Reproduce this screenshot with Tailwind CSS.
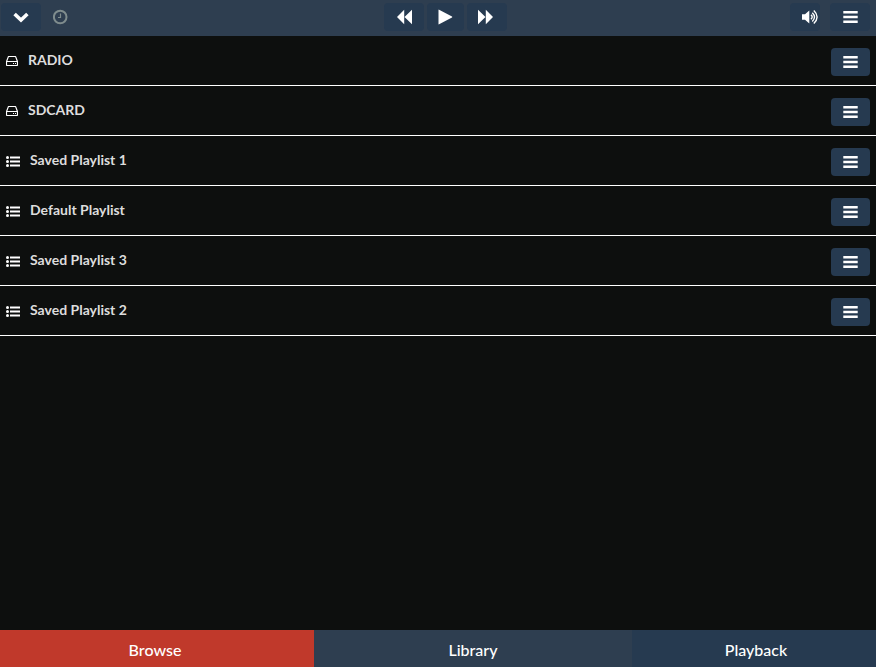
<!DOCTYPE html>
<html lang="en">

<head>
    <title>Browse</title>
    <meta charset="UTF-8">
    <meta name="viewport" content="width=device-width, initial-scale=1.0">
    <script src="https://cdn.jsdelivr.net/npm/@tailwindcss/browser@4"></script>
</head>

<body class="min-h-screen flex flex-col bg-[#0d0f0e] text-white font-['Lato',sans-serif]">
    <!-- Shared icons -->
    <svg class="hidden">
        <symbol id="bars" viewBox="0 0 15 14" preserveAspectRatio="xMinYMin">
            <path d="M.3 1h14.4v2.4H.3zM.3 5.8h14.4v2.4H.3zM.3 10.6h14.4V13H.3z" />
        </symbol>
        <symbol id="drive" viewBox="0 0 12 10">
            <path d="M.5 5.5 2.2 1.1Q2.4.5 3 .5h6q.6 0 .8.6l1.7 4.4v3.2q0 .8-.8.8H1.3q-.8 0-.8-.8zh11" fill="none" stroke="currentColor" stroke-width="1.2" />
            <path d="M7 7h1v1H7zM9 7h1v1H9z" />
        </symbol>
        <symbol id="list" viewBox="0 0 14 11">
            <circle cx="1.5" cy="1.5" r="1.5" />
            <circle cx="1.5" cy="5.5" r="1.5" />
            <circle cx="1.5" cy="9.5" r="1.5" />
            <path d="M4 .5h10v2H4zM4 4.5h10v2H4zM4 8.5h10v2H4z" />
        </symbol>
    </svg>

    <header class="h-9 pb-[2px] pr-[6px] pl-px grid grid-cols-[1fr_auto_1fr] items-center bg-[#2e3e50]">
        <div class="flex items-center gap-3">
            <button aria-label="Collapse" class="w-10 h-7 rounded flex items-center justify-center bg-[#263a50]">
                <svg class="w-4 h-3" viewBox="0 0 16 12">
                    <path d="m1.6 3 6.4 6 6.4-6" fill="none" stroke="currentColor" stroke-width="3.6" />
                </svg>
            </button>
            <svg class="w-4 h-4 text-[#7f8c8d]" viewBox="0 0 16 16" fill="none" stroke="currentColor">
                <circle cx="7.2" cy="8" r="6.3" stroke-width="2" />
                <path d="M7.5 4.5v4H5" stroke-width="1.2" />
            </svg>
        </div>
        <div class="ml-5 flex items-center gap-[3px]">
            <button aria-label="Previous" class="w-10 h-7 rounded flex items-center justify-center bg-[#263a50]">
                <svg class="w-4 h-4 fill-current" viewBox="0 0 16 16">
                    <path d="M8.2 .8v14.4L1 8zM16 .8v14.4L8.5 8z" />
                </svg>
            </button>
            <button aria-label="Play" class="w-[37px] h-7 rounded flex items-center justify-center bg-[#263a50]">
                <svg class="w-4 h-4 fill-current" viewBox="0 0 16 16">
                    <path d="M.5 1q0-.7.6-.3L14 7.6q.6.4 0 .8L1.1 15.3Q.5 15.6.5 15z" />
                </svg>
            </button>
            <button aria-label="Next" class="w-10 h-7 pr-[2px] rounded flex items-center justify-center bg-[#263a50]">
                <svg class="w-4 h-4 fill-current" viewBox="0 0 16 16">
                    <path d="M0 .8v14.4L7.5 8zM7.8 .8v14.4L15 8z" />
                </svg>
            </button>
        </div>
        <div class="flex items-center justify-end gap-[10px]">
            <button aria-label="Volume" class="w-[30px] h-7 pl-3 rounded flex items-center bg-[#263a50]">
                <svg class="w-4 h-4 shrink-0" viewBox="0 0 16 16">
                    <path d="M0 5.3h3L7.3 1.6v12.8L3 10.7H0z" fill="currentColor" />
                    <path d="M9 5.9q2.4 2.1 0 4.3M10.3 3.7q4.4 4.3 0 8.7M11.8 1.6q6.6 6.4 0 12.9" fill="none" stroke="currentColor" stroke-width="1.4" />
                </svg>
            </button>
            <button aria-label="Menu" class="w-10 h-7 rounded flex items-center justify-center bg-[#263a50]">
                <svg class="w-[14px] h-[14px] fill-current overflow-visible"><use href="#bars" width="15" height="14" /></svg>
            </button>
        </div>
    </header>

    <main class="grow">
        <ul class="text-sm leading-5 font-bold text-[#dddddd]">
            <li class="h-[50px] px-[6px] flex items-center border-b border-white">
                <svg class="w-3 h-[10px] mr-[10px] mt-px fill-current text-white"><use href="#drive" /></svg>
                <a href="#" class="grow pb-[2px]">RADIO</a>
                <button aria-label="RADIO menu" class="w-[39px] h-7 mt-[3px] rounded flex items-center justify-center bg-[#263a50] text-white">
                    <svg class="w-[15px] h-[14px] fill-current"><use href="#bars" /></svg>
                </button>
            </li>
            <li class="h-[50px] px-[6px] flex items-center border-b border-white">
                <svg class="w-3 h-[10px] mr-[10px] mt-px fill-current text-white"><use href="#drive" /></svg>
                <a href="#" class="grow pb-[2px]">SDCARD</a>
                <button aria-label="SDCARD menu" class="w-[39px] h-7 mt-[3px] rounded flex items-center justify-center bg-[#263a50] text-white">
                    <svg class="w-[15px] h-[14px] fill-current"><use href="#bars" /></svg>
                </button>
            </li>
            <li class="h-[50px] px-[6px] flex items-center border-b border-white">
                <svg class="w-[14px] h-[11px] mr-[10px] mt-px fill-current text-white"><use href="#list" /></svg>
                <a href="#" class="grow pb-[2px]">Saved Playlist 1</a>
                <button aria-label="Saved Playlist 1 menu" class="w-[39px] h-7 mt-[3px] rounded flex items-center justify-center bg-[#263a50] text-white">
                    <svg class="w-[15px] h-[14px] fill-current"><use href="#bars" /></svg>
                </button>
            </li>
            <li class="h-[50px] px-[6px] flex items-center border-b border-white">
                <svg class="w-[14px] h-[11px] mr-[10px] mt-px fill-current text-white"><use href="#list" /></svg>
                <a href="#" class="grow pb-[2px]">Default Playlist</a>
                <button aria-label="Default Playlist menu" class="w-[39px] h-7 mt-[3px] rounded flex items-center justify-center bg-[#263a50] text-white">
                    <svg class="w-[15px] h-[14px] fill-current"><use href="#bars" /></svg>
                </button>
            </li>
            <li class="h-[50px] px-[6px] flex items-center border-b border-white">
                <svg class="w-[14px] h-[11px] mr-[10px] mt-px fill-current text-white"><use href="#list" /></svg>
                <a href="#" class="grow pb-[2px]">Saved Playlist 3</a>
                <button aria-label="Saved Playlist 3 menu" class="w-[39px] h-7 mt-[3px] rounded flex items-center justify-center bg-[#263a50] text-white">
                    <svg class="w-[15px] h-[14px] fill-current"><use href="#bars" /></svg>
                </button>
            </li>
            <li class="h-[50px] px-[6px] flex items-center border-b border-white">
                <svg class="w-[14px] h-[11px] mr-[10px] mt-px fill-current text-white"><use href="#list" /></svg>
                <a href="#" class="grow pb-[2px]">Saved Playlist 2</a>
                <button aria-label="Saved Playlist 2 menu" class="w-[39px] h-7 mt-[3px] rounded flex items-center justify-center bg-[#263a50] text-white">
                    <svg class="w-[15px] h-[14px] fill-current"><use href="#bars" /></svg>
                </button>
            </li>
        </ul>
    </main>

    <nav class="h-[37px] grid grid-cols-[314fr_318fr_244fr] text-base font-medium text-center">
        <a href="#" class="pt-2 pr-1 bg-[#c0392b]">Browse</a>
        <a href="#" class="pt-2 bg-[#2e3e50]">Library</a>
        <a href="#" class="pt-2 pl-1 bg-[#263a50]">Playback</a>
    </nav>
</body>

</html>
